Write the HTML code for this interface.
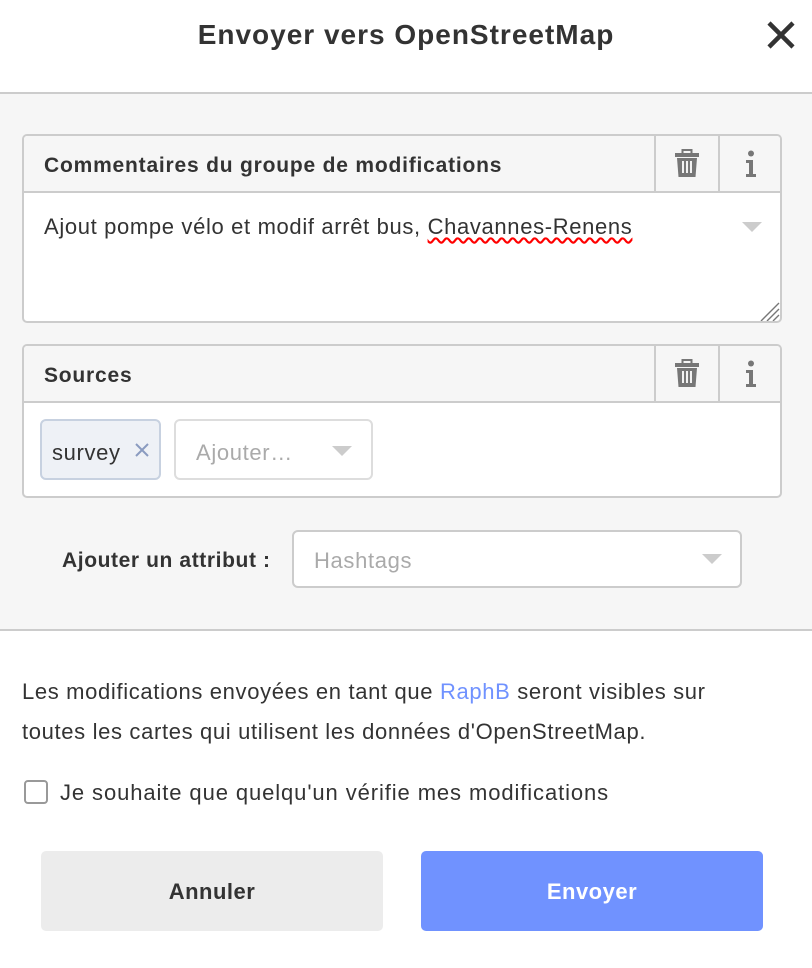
<!DOCTYPE html>
<html><head><meta charset="utf-8"><style>
*{box-sizing:border-box;margin:0;padding:0}
body{width:812px;height:968px;background:#fff;font-family:"Liberation Sans",sans-serif;color:#333;position:relative;overflow:hidden}
.abs{position:absolute}
.title{left:0;width:812px;top:19px;text-align:center;font-weight:bold;font-size:28px;color:#333;letter-spacing:1px}
.grey{left:0;top:92px;width:812px;height:539px;background:#f6f6f6;border-top:2px solid #ccc;border-bottom:2px solid #ccc}
.box{left:22px;width:760px;border:2px solid #ccc;border-radius:5px;background:#fff;overflow:hidden}
.hdr{height:57px;background:#f6f6f6;border-bottom:2px solid #ccc;position:relative}
.hdr b{position:absolute;left:20px;top:18px;font-size:21px;color:#333;letter-spacing:0.8px}
.btn{position:absolute;top:0;width:64px;height:57px;border-left:2px solid #ccc}
.tri{width:0;height:0;border-left:10px solid transparent;border-right:10px solid transparent;border-top:10px solid #ccc;position:absolute}
.txt{font-size:22px;letter-spacing:0.65px}
</style></head><body>
<div class="abs title">Envoyer vers OpenStreetMap</div>
<svg class="abs" style="left:766px;top:20px" width="30" height="30"><path d="M3 3L27 27M27 3L3 27" stroke="#333" stroke-width="4.5"/></svg>
<div class="abs grey"></div>

<div class="abs box" style="top:134px;height:189px">
 <div class="hdr"><b>Commentaires du groupe de modifications</b>
  <div class="btn" style="left:630px"><svg style="position:absolute;left:18px;top:13px" width="26" height="30"><rect x="1" y="4" width="24" height="4" fill="#777"/><rect x="8.5" y="1" width="9" height="4" fill="none" stroke="#777" stroke-width="2"/><path d="M3 9h20l-1.5 19h-17z" fill="#777"/><path d="M9 12v12M13 12v12M17 12v12" stroke="#fff" stroke-width="1.8"/></svg></div>
  <div class="btn" style="left:694px"><svg style="position:absolute;left:24px;top:14px" width="14" height="28"><circle cx="7" cy="3.5" r="3" fill="#777"/><path d="M2 10h7v14h3v3H2v-3h3V13H2z" fill="#777"/></svg></div>
 </div>
 <div class="abs txt" style="left:20px;top:78px">Ajout pompe vélo et modif arrêt bus, <span style="text-decoration:underline wavy red;text-underline-offset:3px">Chavannes-Renens</span></div>
 <div class="tri" style="left:718px;top:86px"></div>
 <svg class="abs" style="left:736px;top:166px" width="20" height="20"><path d="M19 1L1 19M19 7L7 19M19 13L13 19" stroke="#777" stroke-width="1.4"/></svg>
</div>

<div class="abs box" style="top:344px;height:154px">
 <div class="hdr"><b>Sources</b>
  <div class="btn" style="left:630px"><svg style="position:absolute;left:18px;top:13px" width="26" height="30"><rect x="1" y="4" width="24" height="4" fill="#777"/><rect x="8.5" y="1" width="9" height="4" fill="none" stroke="#777" stroke-width="2"/><path d="M3 9h20l-1.5 19h-17z" fill="#777"/><path d="M9 12v12M13 12v12M17 12v12" stroke="#fff" stroke-width="1.8"/></svg></div>
  <div class="btn" style="left:694px"><svg style="position:absolute;left:24px;top:14px" width="14" height="28"><circle cx="7" cy="3.5" r="3" fill="#777"/><path d="M2 10h7v14h3v3H2v-3h3V13H2z" fill="#777"/></svg></div>
 </div>
 <div class="abs" style="left:16px;top:73px;width:121px;height:61px;background:#eef1f6;border:2px solid #c7d1e0;border-radius:6px"></div>
 <div class="abs txt" style="left:28px;top:94px">survey</div>
 <svg class="abs" style="left:111px;top:97px" width="14" height="14"><path d="M1 1L13 13M13 1L1 13" stroke="#8a9bc0" stroke-width="2"/></svg>
 <div class="abs" style="left:150px;top:73px;width:199px;height:61px;border:2px solid #ddd;border-radius:6px"></div>
 <div class="abs txt" style="left:172px;top:94px;color:#aaa">Ajouter…</div>
 <div class="tri" style="left:308px;top:100px"></div>
</div>

<div class="abs" style="left:62px;top:549px;font-size:21px;font-weight:bold;letter-spacing:0.6px">Ajouter un attribut :</div>
<div class="abs" style="left:292px;top:530px;width:450px;height:58px;border:2px solid #ccc;border-radius:6px;background:#fff"></div>
<div class="abs txt" style="left:314px;top:548px;color:#aaa">Hashtags</div>
<div class="tri" style="left:702px;top:554px"></div>

<div class="abs txt" style="left:22px;top:672px;line-height:40px;width:790px">Les modifications envoyées en tant que <span style="color:#7092ff">RaphB</span> seront visibles sur<br>toutes les cartes qui utilisent les données d'OpenStreetMap.</div>
<div class="abs" style="left:24px;top:780px;width:24px;height:24px;border:2px solid #999;border-radius:4px;background:#fff"></div>
<div class="abs txt" style="left:60px;top:780px;letter-spacing:0.9px">Je souhaite que quelqu'un vérifie mes modifications</div>

<div class="abs" style="left:41px;top:851px;width:342px;height:80px;background:#ececec;border-radius:5px;text-align:center;line-height:82px;font-weight:bold;font-size:22px;letter-spacing:0.5px">Annuler</div>
<div class="abs" style="left:421px;top:851px;width:342px;height:80px;background:#7092ff;border-radius:5px;text-align:center;line-height:82px;font-weight:bold;font-size:22px;color:#fff;letter-spacing:0.5px">Envoyer</div>
</body></html>
